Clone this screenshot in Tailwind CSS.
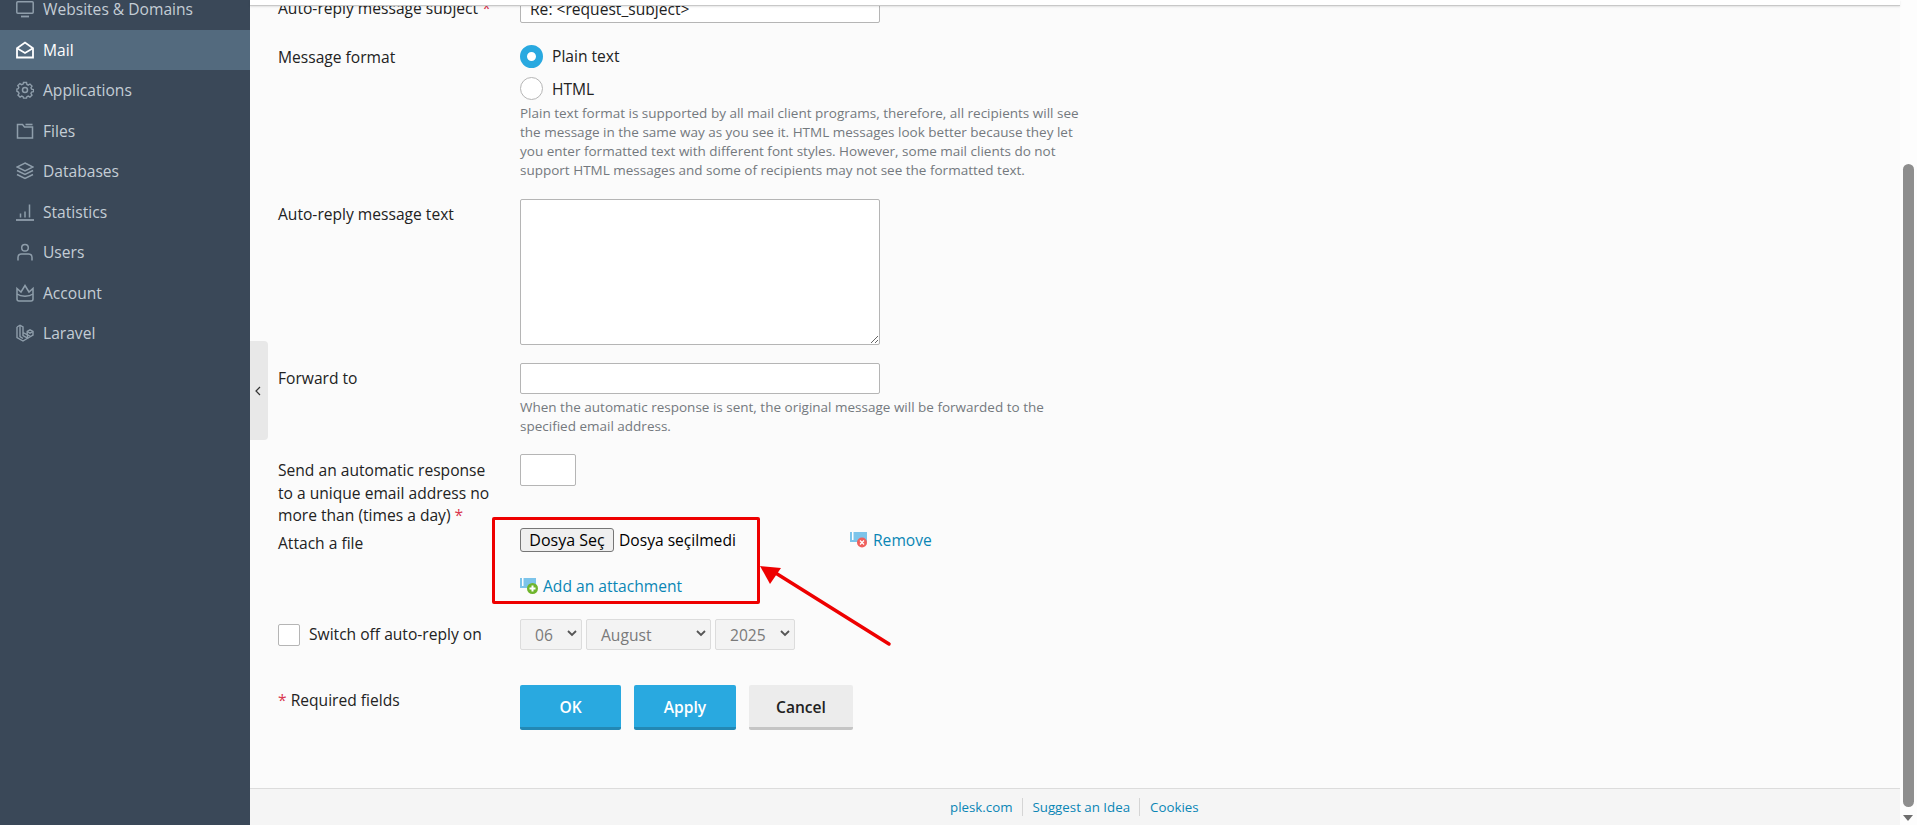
<!DOCTYPE html>
<html>
<head>
<title>Mail - Auto-reply</title>
<meta charset="utf-8">
<meta name="viewport" content="width=device-width, initial-scale=1">
<script src="https://cdn.jsdelivr.net/npm/@tailwindcss/browser@4"></script>
</head>
<body class="h-[825px] overflow-hidden flex bg-[#fbfbfb] text-[15.6px] leading-[22.5px] text-[#222] [font-family:'Open_Sans',sans-serif]">
  <!-- Sidebar -->
  <nav class="w-[250px] shrink-0 bg-[#3a4858] text-[#c4cdd5] overflow-hidden">
    <div class="-mt-[11px]">
      <a class="flex items-center h-[40.5px] pl-4 gap-[9px]">
        <svg class="w-[18px] h-[18px] text-[#8f9eab]" viewBox="0 0 18 18" fill="none" stroke="currentColor" stroke-width="1.500"><rect x="0.8" y="1.800" width="16.400" height="11.400" rx="1"/><path d="M5 16.500h8" stroke-width="1.800"/></svg>
        <span>Websites &amp; Domains</span>
      </a>
      <a class="flex items-center h-[40.5px] pl-4 gap-[9px] bg-[#536a7e] text-white">
        <svg class="w-[18px] h-[18px]" viewBox="0 0 18 18" fill="none" stroke="currentColor" stroke-width="1.800"><path d="M1 7.200 9 1.500l8 5.700V16.500H1z"/><path d="M1.500 7.500 9 12l7.500-4.500"/></svg>
        <span class="pt-px">Mail</span>
      </a>
      <a class="flex items-center h-[40.5px] pl-4 gap-[9px]">
        <svg class="w-[18px] h-[18px] text-[#8f9eab]" viewBox="0 0 18 18" fill="none" stroke="currentColor" stroke-width="1.500"><path d="M7.300 1h3.400l.4 2.200 1.500.7 1.900-1.200 2.300 2.300-1.200 1.900.7 1.500 2.200.4v2.400l-2.200.4-.7 1.500 1.200 1.900-2.300 2.300-1.900-1.200-1.500.7-.4 1.600H7.300l-.4-1.600-1.500-.7-1.900 1.200-2.300-2.300 1.200-1.900-.7-1.500L0 10.700V8.300l1.500-.4.700-1.500L1 4.500 3.300 2.200l1.900 1.200 1.700-.7z" transform="translate(.9 .6) scale(.9)"/><circle cx="9" cy="9" r="2.500"/></svg>
        <span>Applications</span>
      </a>
      <a class="flex items-center h-[40.5px] pl-4 gap-[9px]">
        <svg class="w-[18px] h-[18px] text-[#8f9eab]" viewBox="0 0 18 18" fill="none" stroke="currentColor" stroke-width="1.500"><path d="M1.500 2.500h5l2 2.500h8v11h-15z"/><path d="M9.500 2.500h7" stroke-width="1.600"/></svg>
        <span>Files</span>
      </a>
      <a class="flex items-center h-[40.5px] pl-4 gap-[9px]">
        <svg class="w-[18px] h-[18px] text-[#8f9eab]" viewBox="0 0 18 18" fill="none" stroke="currentColor" stroke-width="1.500"><path d="M9 1 17 5 9 9 1 5z"/><path d="M1 8.500 9 12.500l8-4M1 12.500l8 4 8-4"/></svg>
        <span>Databases</span>
      </a>
      <a class="flex items-center h-[40.5px] pl-4 gap-[9px]">
        <svg class="w-[18px] h-[18px] text-[#8f9eab]" viewBox="0 0 18 18" fill="none" stroke="currentColor" stroke-width="1.500"><path d="M0 17h18" stroke-width="1.800"/><path d="M4.500 14.500v-4M9 14.500v-6M13.500 14.500V1.500"/></svg>
        <span>Statistics</span>
      </a>
      <a class="flex items-center h-[40.5px] pl-4 gap-[9px]">
        <svg class="w-[18px] h-[18px] text-[#8f9eab]" viewBox="0 0 18 18" fill="none" stroke="currentColor" stroke-width="1.500"><circle cx="9" cy="4.800" r="3.300"/><path d="M2 17.500v-3c0-2 1.500-3.500 3.500-3.500h7c2 0 3.500 1.500 3.500 3.500v3"/></svg>
        <span>Users</span>
      </a>
      <a class="flex items-center h-[40.5px] pl-4 gap-[9px]">
        <svg class="w-[18px] h-[18px] text-[#8f9eab]" viewBox="0 0 18 18" fill="none" stroke="currentColor" stroke-width="1.500"><path d="M1 4.500 5 8 9 1.500 13 8l4-3.500V15a2 2 0 0 1-2 2H3a2 2 0 0 1-2-2z"/><path d="M1 10c4 3 12 3 16 0"/></svg>
        <span>Account</span>
      </a>
      <a class="flex items-center h-[40.5px] pl-4 gap-[9px]">
        <svg class="w-[18px] h-[18px] text-[#8f9eab]" viewBox="0 0 18 18" fill="none" stroke="currentColor" stroke-width="1.400"><path d="M1 3 4 1.200 7 3v8.500l4.500 2.500v-3L7 8.500"/><path d="M1 3v10.500L7 17l5-3 5-3V7.500l-3-1.700-2.800 1.700v3.200l3 1.700"/><path d="M4 1.200v11.500l3 1.800"/><path d="M11.200 7.500l2.800 1.600 3-1.600"/></svg>
        <span>Laravel</span>
      </a>
    </div>
  </nav>

  <!-- Main column -->
  <div class="relative flex-1 min-w-0 flex flex-col">
    <div class="h-[6px] shrink-0 mr-[17px] bg-white border-b border-[#c8c8c8] shadow-[0_1px_2px_rgba(0,0,0,0.1)] relative z-10"></div>

    <main class="flex-1 min-h-0 overflow-hidden pl-7">
      <div class="-mt-[14px]">
        <div class="flex">
          <div class="w-[242px] pt-[5px]">Auto-reply message subject <span class="text-[#d9364f]">*</span></div>
          <input type="text" value="Re: <request_subject>" class="w-[360px] h-[31px] px-[9px] pt-[2px] bg-white border border-[#b5b5b5] rounded-[2px]">
        </div>

        <div class="flex mt-[22px]">
          <div class="w-[242px] pt-[1px]">Message format</div>
          <div class="w-[570px]">
            <div class="flex items-center h-[23px] gap-[9px]">
              <span class="w-[23px] h-[23px] rounded-full border-[7px] border-[#29a9e0] bg-white"></span>
              <span>Plain text</span>
            </div>
            <div class="flex items-center h-[23px] gap-[9px] mt-[9px]">
              <span class="w-[23px] h-[23px] rounded-full border border-[#b5b5b5] bg-white"></span>
              <span class="pt-px">HTML</span>
            </div>
            <p class="mt-[4px] text-[13.5px] leading-[19px] text-[#74797e]">Plain text format is supported by all mail client programs, therefore, all recipients will see the message in the same way as you see it. HTML messages look better because they let you enter formatted text with different font styles. However, some mail clients do not support HTML messages and some of recipients may not see the formatted text.</p>
          </div>
        </div>

        <div class="flex mt-[19px]">
          <div class="w-[242px] pt-[4px]">Auto-reply message text</div>
          <textarea class="block w-[360px] h-[146px] bg-white border border-[#b5b5b5] rounded-[2px]"></textarea>
        </div>

        <div class="flex mt-[18px]">
          <div class="w-[242px] pt-[4px]">Forward to</div>
          <div class="w-[570px]">
            <input type="text" class="block w-[360px] h-[31px] bg-white border border-[#b5b5b5] rounded-[2px]">
            <p class="mt-[4px] text-[13.5px] leading-[19px] text-[#74797e]">When the automatic response is sent, the original message will be forwarded to the specified email address.</p>
          </div>
        </div>

        <div class="flex mt-[18px] h-[73px]">
          <div class="w-[242px] pt-[5px] pr-[27px]">Send an automatic response to a unique email address no more than (times a day) <span class="text-[#d9364f]">*</span></div>
          <input type="text" class="w-[56px] h-[32px] bg-white border border-[#b5b5b5] rounded-[2px]">
        </div>

        <div class="flex h-[92px]">
          <div class="w-[242px] pt-[5px]">Attach a file</div>
          <div class="w-[330px]">
            <div class="flex items-center gap-[5px] pt-[1px]">
              <button type="button" class="w-[94px] h-[24px] bg-[#efefef] border border-[#767676] rounded-[3px] text-black text-[16px] leading-none">Dosya Seç</button>
              <span class="text-black">Dosya seçilmedi</span>
            </div>
            <a class="flex items-center gap-[5px] mt-[23px] text-[#0a86b5]">
              <svg class="w-[18px] h-[16px]" viewBox="0 0 18 16"><rect x="0" y="0" width="16" height="10" fill="#7cc4ea"/><rect x="2" y="0" width="1.500" height="8" fill="#fff"/><circle cx="12.500" cy="10.500" r="5.500" fill="#6fb52c"/><path d="M12.500 7.500v6M9.500 10.500h6" stroke="#fff" stroke-width="2"/></svg>
              <span>Add an attachment</span>
            </a>
          </div>
          <a class="flex items-start gap-[5px] pt-[2px] text-[#0a86b5]">
            <svg class="w-[18px] h-[16px] mt-[3px]" viewBox="0 0 18 16"><rect x="0" y="0" width="17" height="10" fill="#7cc4ea"/><rect x="2" y="0" width="1.500" height="8" fill="#fff"/><circle cx="12" cy="10.500" r="5" fill="#f0605c"/><path d="m10 8.500 4 4m0-4-4 4" stroke="#fff" stroke-width="1.300"/></svg>
            <span>Remove</span>
          </a>
        </div>

        <div class="flex items-center h-[31px]">
          <label class="w-[242px] flex items-center gap-[9px]">
            <span class="w-[22px] h-[22px] bg-white border border-[#b5b5b5] rounded-[2px]"></span>
            Switch off auto-reply on
          </label>
          <div class="flex gap-[4px] text-[#7a7a7a]">
            <div class="relative w-[62px] h-[31px] flex items-center pl-[14px] pt-px bg-[#f3f3f3] border border-[#dcdcdc] rounded-[2px]">06
              <svg class="absolute right-[4px] top-[10px] w-[10px] h-[7px]" viewBox="0 0 10 7" fill="none" stroke="#555" stroke-width="1.800"><path d="m1 1 4 4 4-4"/></svg>
            </div>
            <div class="relative w-[125px] h-[31px] flex items-center pl-[14px] pt-px bg-[#f3f3f3] border border-[#dcdcdc] rounded-[2px]">August
              <svg class="absolute right-[4px] top-[10px] w-[10px] h-[7px]" viewBox="0 0 10 7" fill="none" stroke="#555" stroke-width="1.800"><path d="m1 1 4 4 4-4"/></svg>
            </div>
            <div class="relative w-[80px] h-[31px] flex items-center pl-[14px] pt-px bg-[#f3f3f3] border border-[#dcdcdc] rounded-[2px]">2025
              <svg class="absolute right-[4px] top-[10px] w-[10px] h-[7px]" viewBox="0 0 10 7" fill="none" stroke="#555" stroke-width="1.800"><path d="m1 1 4 4 4-4"/></svg>
            </div>
          </div>
        </div>

        <div class="flex mt-[35px]">
          <div class="w-[242px] pt-[4px]"><span class="text-[#d9364f]">*</span> Required fields</div>
          <div class="flex gap-[13px] font-semibold">
            <button type="button" class="w-[101px] h-[45px] pt-[2px] bg-[#29a9e0] border-b-[3px] border-[#2388b4] rounded-[2px] text-white">OK</button>
            <button type="button" class="w-[102px] h-[45px] pt-[2px] bg-[#29a9e0] border-b-[3px] border-[#2388b4] rounded-[2px] text-white">Apply</button>
            <button type="button" class="w-[104px] h-[45px] pt-[2px] bg-[#ececec] border-b-[3px] border-[#c5c5c5] rounded-[2px] text-[#222]">Cancel</button>
          </div>
        </div>
      </div>
    </main>

    <footer class="h-[37px] shrink-0 mr-[17px] bg-[#f5f5f5] border-t border-[#dcdcdc] flex items-center pl-[700px] text-[13.3px] text-[#0a86b5]">
      <a class="pr-[10px] border-r border-[#d5d5d5] leading-[18px]">plesk.com</a>
      <a class="px-[9px] border-r border-[#d5d5d5] leading-[18px]">Suggest an Idea</a>
      <a class="pl-[10px] leading-[18px]">Cookies</a>
    </footer>

    <!-- Sidebar collapse handle -->
    <div class="absolute left-0 top-[341px] w-[18px] h-[99px] bg-[#e8e8e8] rounded-r-[4px] flex items-center justify-center">
      <svg class="w-[6px] h-[10px] -ml-[3px]" viewBox="0 0 6 10" fill="none" stroke="#333" stroke-width="1.200"><path d="M5 1 1 5l4 4"/></svg>
    </div>

    <!-- Scrollbar -->
    <div class="absolute right-0 top-0 bottom-0 w-[17px] bg-[#fdfdfd]">
      <div class="absolute left-[3px] top-[164px] w-[11px] h-[643px] bg-[#8e8e8e] rounded-full"></div>
      <div class="absolute left-[3px] bottom-[4px] w-0 h-0 border-x-[5.5px] border-x-transparent border-t-[6px] border-t-[#6e6e6e]"></div>
    </div>

    <!-- Annotation drawn over the screenshot -->
    <div class="absolute left-[242px] top-[517px] w-[268px] h-[87px] border-[3px] border-[#ee0000] rounded-[2px]"></div>
    <svg class="absolute left-0 top-0 w-[700px] h-[700px] pointer-events-none" viewBox="0 0 700 700" fill="none">
      <path d="M639 644 524 572" stroke="#ee0000" stroke-width="3.500" stroke-linecap="round"/>
      <path d="M510 566 531 568 520 584z" fill="#ee0000"/>
    </svg>
  </div>
</body>
</html>
